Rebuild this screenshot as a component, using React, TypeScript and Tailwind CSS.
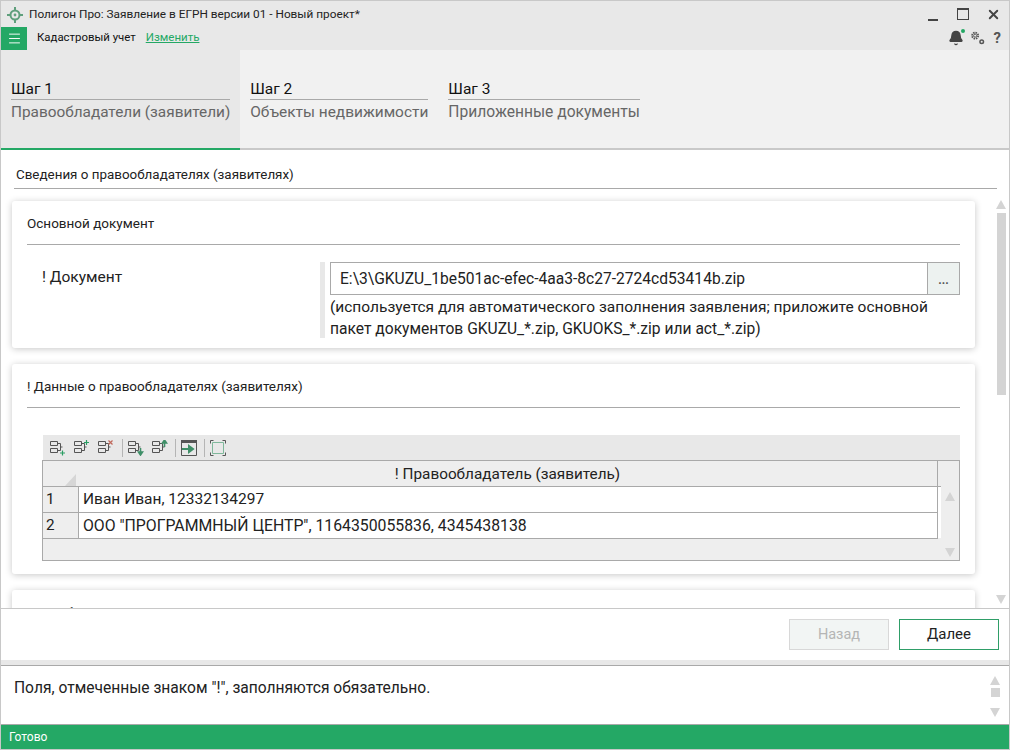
import { Bell, Menu, X } from "lucide-react";

const font = "font-['Roboto',sans-serif]";

function Logo() {
  return (
    <svg width="18" height="18" viewBox="0 0 18 18" fill="none" stroke="#5f9f7c" strokeWidth="2" className="mt-[2px]">
      <circle cx="9" cy="9" r="4.5" />
      <circle cx="9" cy="9" r="1.4" fill="#5f9f7c" stroke="none" />
      <path d="M9 1v4M9 13v4M1 9h4M13 9h4" />
    </svg>
  );
}

function Gears() {
  return (
    <svg width="15" height="16" viewBox="0 0 16 16" fill="none" stroke="#555">
      <circle cx="5.5" cy="5.5" r="3.2" strokeWidth="2" strokeDasharray="1.6 0.9" />
      <circle cx="5.5" cy="5.5" r="1.6" strokeWidth="1" />
      <circle cx="12.5" cy="12" r="1.9" strokeWidth="1.6" />
    </svg>
  );
}

function TreeIcon({ mark }: { mark: "plus" | "plusTop" | "cross" | "down" | "up" }) {
  return (
    <svg width="16" height="16" viewBox="0 0 16 16" fill="none">
      <path d="M0.5 1.5h7v4h-7zM0.5 8.5h7v4h-7z" stroke="#555" />
      <path d="M7.5 3.5h3v7h-3M10.5 7h2" stroke="#555" />
      {mark === "plus" && <path d="M12.5 10.5v5M10 13h5" stroke="#2a9d63" strokeWidth="1.2" />}
      {mark === "plusTop" && <path d="M12.5 0v5M10 2.5h5" stroke="#2a9d63" strokeWidth="1.2" />}
      {mark === "cross" && <path d="M10.5 0.5l4 4M14.5 0.5l-4 4" stroke="#c0675a" strokeWidth="1.2" />}
      {mark === "down" && <path d="M12.5 8v5M10.5 12l2 3 2-3z" stroke="#3f8f68" strokeWidth="1.6" fill="#3f8f68" />}
      {mark === "up" && <path d="M12.5 7V2M10.5 3l2-3 2 3z" stroke="#3f8f68" strokeWidth="1.6" fill="#3f8f68" />}
    </svg>
  );
}

function ToolbarSep({ className = "" }: { className?: string }) {
  return <div className={`-mr-[3px] h-[18px] w-px bg-[#b5b5b5] ${className}`} />;
}

function Up({ className = "" }: { className?: string }) {
  return <div className={`h-0 w-0 border-x-[5px] border-b-[9px] border-x-transparent border-b-[#d4d4d4] ${className}`} />;
}

function Down({ className = "" }: { className?: string }) {
  return <div className={`h-0 w-0 border-x-[5px] border-t-[9px] border-x-transparent border-t-[#d4d4d4] ${className}`} />;
}

function Step({ num, title, size, active }: { num: string; title: string; size: string; active?: boolean }) {
  return (
    <div className={`flex h-full flex-col border-b-2 px-[10px] pt-[29px] ${active ? "border-[#24a865] bg-[#e8e8e8]" : "border-[#c9c9c9] bg-[#f1f1f1]"}`}>
      <div className="border-b border-[#a9a9a9] text-[15.5px] leading-[20px] text-[#111]">{num}</div>
      <div className={`mt-[1px] whitespace-nowrap leading-[22px] text-[#666] ${size}`}>{title}</div>
    </div>
  );
}

function Card({ title, children, className = "" }: { title: string; children?: React.ReactNode; className?: string }) {
  return (
    <div className={`rounded-[3px] bg-white px-[15px] shadow-[0_1px_7px_rgba(0,0,0,0.22)] ${className}`}>
      <div className="flex h-[44px] items-center border-b border-[#a9a9a9] pt-[1px] text-[13.5px] text-[#222]">{title}</div>
      {children}
    </div>
  );
}

export default function App() {
  return (
    <div className={`${font} flex h-[750px] w-[1010px] flex-col overflow-hidden border border-[#c8c8c8] bg-white text-[#222]`}>
      {/* title bar */}
      <div className="flex h-[25px] shrink-0 items-center bg-[#e8e8e8] pl-[5px]">
        <Logo />
        <span className="ml-[5px] mt-[2px] text-[11.8px] text-[#222]">Полигон Про: Заявление в ЕГРН версии 01 - Новый проект*</span>
        <div className="ml-auto flex items-center pr-[8px] text-[#444]">
          <div className="mt-[12px] h-[2px] w-[10px] bg-[#444]" />
          <div className="ml-[19px] h-[12px] w-[12px] border-[1.5px] border-t-[2px] border-[#444]" />
          <X size={15} strokeWidth={3} className="ml-[17px] mt-[2px]" />
        </div>
      </div>
      {/* toolbar */}
      <div className="flex h-[24px] shrink-0 items-center bg-[#e8e8e8]">
        <div className="flex h-[23px] w-[26px] items-center justify-center bg-[#24a865] text-white">
          <Menu size={15} strokeWidth={1.5} />
        </div>
        <span className="ml-[10px] text-[11.4px] text-[#111]">Кадастровый учет</span>
        <span className="ml-[10px] text-[11.5px] text-[#24a865] underline">Изменить</span>
        <div className="ml-auto flex items-center pr-[8px]">
          <div className="relative mr-[6px]">
            <Bell size={16} fill="#444" stroke="#444" />
            <div className="absolute -right-[1px] -top-[1px] h-[4px] w-[4px] rounded-full bg-[#24a865]" />
          </div>
          <Gears />
          <span className="ml-[9px] text-[15px] font-bold leading-none text-[#555]">?</span>
        </div>
      </div>
      {/* steps */}
      <div className="flex h-[100px] shrink-0 bg-[#f1f1f1]">
        <Step num="Шаг 1" title="Правообладатели (заявители)" size="text-[15.35px]" active />
        <Step num="Шаг 2" title="Объекты недвижимости" size="text-[15.45px]" />
        <Step num="Шаг 3" title="Приложенные документы" size="text-[15.6px]" />
        <div className="flex-1 border-b-2 border-[#c9c9c9]" />
      </div>
      {/* content */}
      <div className="flex h-[458px] shrink-0 overflow-hidden">
        <div className="w-[995px] shrink-0 pl-[11px]">
          <div className="ml-[2px] mr-[-1px] flex h-[39px] items-end border-b border-[#a9a9a9] pb-[3px] pl-[2px] text-[13.4px] text-[#222]">
            Сведения о правообладателях (заявителях)
          </div>
          <Card title="Основной документ" className="mt-[12px] h-[147px] w-[963px]">
            <div className="mt-[17px] flex">
              <div className="w-[293px] pl-[15px] pt-[4px] text-[15.5px] text-[#222]">! Документ</div>
              <div className="h-[76px] w-[5px] bg-[#e8e8e8]" />
              <div className="ml-[5px] w-[630px]">
                <div className="flex h-[33px] border border-[#a9a9a9]">
                  <div className="flex flex-1 items-center pl-[9px] pt-[2px] text-[15.6px] text-[#222]">E:\3\GKUZU_1be501ac-efec-4aa3-8c27-2724cd53414b.zip</div>
                  <div className="flex w-[32px] items-center justify-center border-l border-[#a9a9a9] bg-[#edf2f0] pt-[2px] text-[12px] font-bold text-[#555]">...</div>
                </div>
                <div className="mt-[1px] text-[15.5px] leading-[22px] text-[#222]">
                  (используется для автоматического заполнения заявления; приложите основной<br />
                  <span className="text-[15.6px]">пакет документов GKUZU_*.zip, GKUOKS_*.zip или act_*.zip)</span>
                </div>
              </div>
            </div>
          </Card>
          <Card title="! Данные о правообладателях (заявителях)" className="mt-[16px] h-[210px] w-[963px]">
            <div className="ml-[16px] mt-[27px] flex h-[25px] items-center gap-[8px] bg-[#e8e8e8] pl-[7px]">
              <TreeIcon mark="plus" />
              <TreeIcon mark="plusTop" />
              <TreeIcon mark="cross" />
              <ToolbarSep />
              <TreeIcon mark="down" />
              <TreeIcon mark="up" />
              <ToolbarSep className="-ml-px" />
              <svg width="16" height="16" viewBox="0 0 16 16" fill="none">
                <path d="M0.5 0.5h15v15h-15z" stroke="#555" />
                <path d="M0 0h16v3H0z" fill="#555" />
                <path d="M1 9h8M8 6l4 3-4 3z" stroke="#3f8f68" strokeWidth="2" fill="#3f8f68" />
              </svg>
              <ToolbarSep className="-ml-px" />
              <svg width="16" height="16" viewBox="0 0 16 16" fill="none">
                <path d="M0.5 3.5v-3h3M12.5 0.5h3v3M15.5 12.5v3h-3M3.5 15.5h-3v-3" stroke="#555" />
                <path d="M2.5 2.5h11v11h-11z" stroke="#7fb89b" />
              </svg>
            </div>
            <div className="ml-[15px] flex h-[101px] w-[918px] flex-col border border-[#a9a9a9] bg-[#eeeeee] text-[15.3px] text-[#222]">
              <div className="flex h-[25px] shrink-0">
                <div className="flex w-[35px] items-end justify-end pr-[2px]">
                  <div className="h-0 w-0 border-b-[12px] border-l-[11px] border-b-[#d6d6d6] border-l-transparent" />
                </div>
                <div className="flex w-[860px] items-center justify-center border-r border-[#a9a9a9] pt-[2px]">! Правообладатель (заявитель)</div>
              </div>
              <div className="flex flex-1">
                <div className="w-[895px]">
                  <div className="flex h-[26px] border-t border-[#a9a9a9]">
                    <div className="flex w-[35px] items-center pl-[3px]">1</div>
                    <div className="flex flex-1 items-center border-x border-[#a9a9a9] bg-white pl-[4px] pt-[1px] text-[15.5px]">Иван Иван, 12332134297</div>
                  </div>
                  <div className="flex h-[27px] border-y border-[#a9a9a9]">
                    <div className="flex w-[35px] items-center pl-[3px]">2</div>
                    <div className="flex flex-1 items-center border-x border-[#a9a9a9] bg-white pl-[4px] text-[15.8px]">ООО "ПРОГРАММНЫЙ ЦЕНТР", 1164350055836, 4345438138</div>
                  </div>
                </div>
                <div className="h-[52px] w-[3px] border-t border-[#a9a9a9] bg-white" />
                <div className="flex flex-1 flex-col items-center justify-between pb-[3px] pt-[6px]">
                  <Up />
                  <Down />
                </div>
              </div>
            </div>
          </Card>
          <Card title="Способ представления" className="mt-[16px] h-[80px] w-[963px]" />
        </div>
        <div className="flex w-[10px] shrink-0 flex-col items-center pt-[50px]">
          <Up />
          <div className="mt-[4px] h-[182px] w-[9px] bg-[#d4d4d4]" />
          <Down className="mt-[200px]" />
        </div>
      </div>
      {/* nav buttons */}
      <div className="flex h-[52px] shrink-0 items-center justify-end gap-[10px] border-t border-[#c8c8c8] pr-[10px]">
        <div className="flex h-[31px] w-[100px] items-center justify-center border border-[#d8d8d8] bg-[#f2f5f4] text-[14.5px] text-[#b5b5b5]">Назад</div>
        <div className="flex h-[31px] w-[100px] items-center justify-center border border-[#2f9e68] bg-white text-[15px] text-[#222]">Далее</div>
      </div>
      <div className="h-[5px] shrink-0 bg-[#e8e8e8]" />
      {/* message */}
      <div className="flex h-[60px] shrink-0 border-y border-[#a9a9a9] bg-white pl-[13px] pr-[8px]">
        <div className="flex-1 pt-[11px] text-[15.6px] text-[#222]">Поля, отмеченные знаком "!", заполняются обязательно.</div>
        <div className="flex w-[12px] flex-col items-center pt-[10px]">
          <Up />
          <div className="mt-[3px] h-[9px] w-[9px] bg-[#d4d4d4]" />
          <Down className="mt-[11px]" />
        </div>
      </div>
      {/* status */}
      <div className="flex h-[24px] shrink-0 items-center bg-[#24a865] pl-[8px] text-[12px] text-white">Готово</div>
    </div>
  );
}
